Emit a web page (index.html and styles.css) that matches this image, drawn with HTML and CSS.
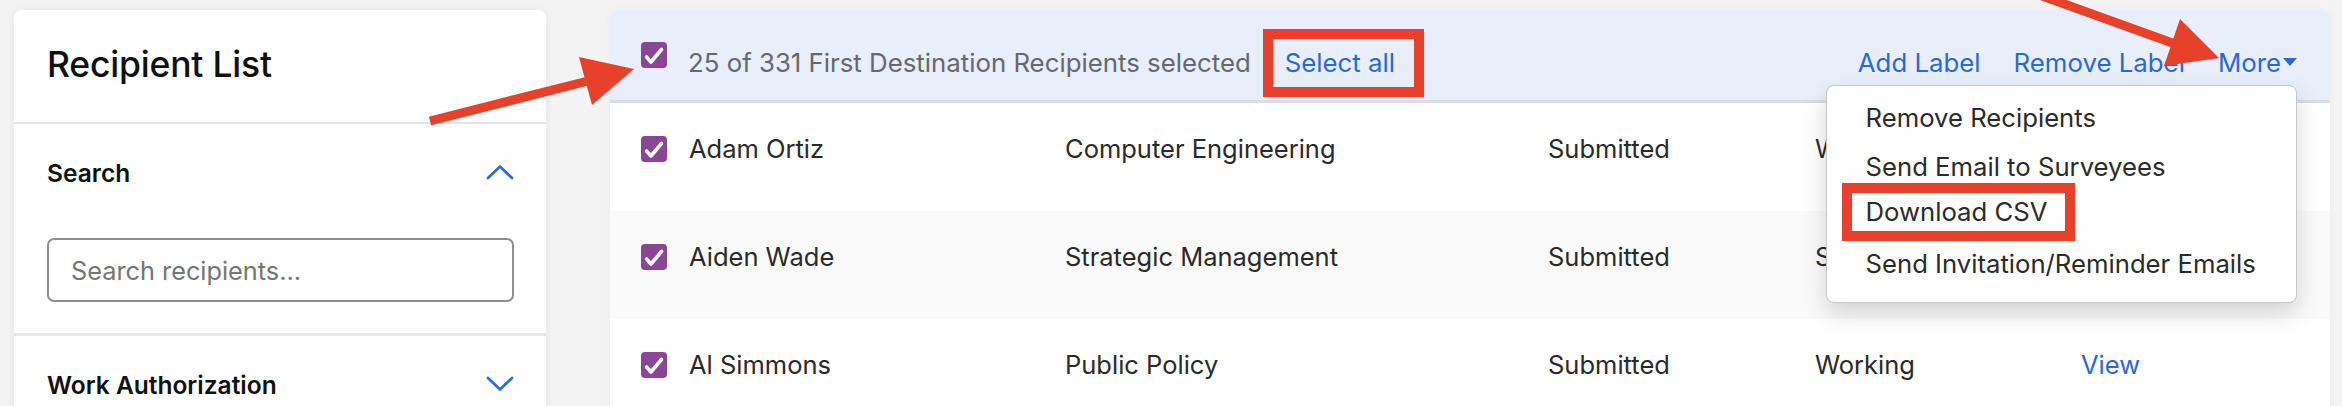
FILE: index.html
```html
<!DOCTYPE html>
<html lang="en">
<head>
<meta charset="utf-8">
<title>Recipient List</title>
<link rel="stylesheet" href="styles.css">
</head>
<body>
<div class="page">
  <aside class="sidebar">
    <div class="side-head"><h1 class="side-title">Recipient List</h1></div>
    <section class="filter">
      <div class="filter-head">
        <h2 class="filter-title">Search</h2>
        <svg class="chev" width="28" height="16" viewBox="0 0 28 16"><path d="M2 14 L14 2.5 L26 14" fill="none" stroke="#2b6de0" stroke-width="2.8" stroke-linecap="round" stroke-linejoin="round"/></svg>
      </div>
      <input class="search" type="text" placeholder="Search recipients...">
    </section>
    <section class="filter">
      <div class="filter-head">
        <h2 class="filter-title">Work Authorization</h2>
        <svg class="chev" width="28" height="16" viewBox="0 0 28 16"><path d="M2 2 L14 13.5 L26 2" fill="none" stroke="#2b6de0" stroke-width="2.8" stroke-linecap="round" stroke-linejoin="round"/></svg>
      </div>
    </section>
  </aside>

  <main class="panel">
    <div class="bulkbar">
      <span class="cb cb-head"><svg width="26" height="26" viewBox="0 0 26 26"><polyline points="5.5,15 10,20 20.5,7.5" fill="none" stroke="#fff" stroke-width="3.6" stroke-linecap="round" stroke-linejoin="round"/></svg></span>
      <span class="count">25 of 331 First Destination Recipients selected</span>
      <a class="link select-all">Select all</a>
      <div class="actions">
        <a class="link">Add Label</a>
        <a class="link">Remove Label</a>
        <a class="link more">More<span class="caret"></span></a>
      </div>
      <ul class="menu">
        <li class="menu-item">Remove Recipients</li>
        <li class="menu-item">Send Email to Surveyees</li>
        <li class="menu-item"><span class="marked">Download CSV</span></li>
        <li class="menu-item">Send Invitation/Reminder Emails</li>
      </ul>
    </div>

    <div class="row">
      <span class="cb"><svg width="26" height="26" viewBox="0 0 26 26"><polyline points="5.5,15 10,20 20.5,7.5" fill="none" stroke="#fff" stroke-width="3.6" stroke-linecap="round" stroke-linejoin="round"/></svg></span>
      <span class="cell">Adam Ortiz</span>
      <span class="cell">Computer Engineering</span>
      <span class="cell">Submitted</span>
      <span class="cell">Working</span>
      <a class="cell link">View</a>
    </div>
    <div class="row alt">
      <span class="cb"><svg width="26" height="26" viewBox="0 0 26 26"><polyline points="5.5,15 10,20 20.5,7.5" fill="none" stroke="#fff" stroke-width="3.6" stroke-linecap="round" stroke-linejoin="round"/></svg></span>
      <span class="cell">Aiden Wade</span>
      <span class="cell">Strategic Management</span>
      <span class="cell">Submitted</span>
      <span class="cell">Seeking</span>
      <a class="cell link">View</a>
    </div>
    <div class="row">
      <span class="cb"><svg width="26" height="26" viewBox="0 0 26 26"><polyline points="5.5,15 10,20 20.5,7.5" fill="none" stroke="#fff" stroke-width="3.6" stroke-linecap="round" stroke-linejoin="round"/></svg></span>
      <span class="cell">Al Simmons</span>
      <span class="cell">Public Policy</span>
      <span class="cell">Submitted</span>
      <span class="cell">Working</span>
      <a class="cell link">View</a>
    </div>
  </main>

  <svg class="arrows" width="2342" height="406" viewBox="0 0 2342 406">
    <line x1="430" y1="121" x2="592" y2="80" stroke="#e8412a" stroke-width="9"/>
    <polygon points="579,57 634,69 592,105" fill="#e8412a"/>
    <line x1="2020" y1="-12" x2="2178" y2="45" stroke="#e8412a" stroke-width="9"/>
    <polygon points="2180,19 2219,58 2164,66" fill="#e8412a"/>
  </svg>
</div>
</body>
</html>
```

FILE: styles.css
```css
* { box-sizing: border-box; }

html, body {
  margin: 0;
  padding: 0;
  height: 406px;
  overflow: hidden;
  background: #f4f4f4;
  font-family: "Inter", "Liberation Sans", sans-serif;
}

.page {
  position: relative;
  display: flex;
  gap: 64px;
  padding: 10px 12px 0 14px;
  height: 406px;
}

/* ---------- sidebar ---------- */
.sidebar {
  width: 532px;
  flex: none;
  height: 460px;
  background: #fff;
  border-radius: 8px 8px 0 0;
  box-shadow: 0 0 10px rgba(0, 0, 0, 0.07);
}

.side-head {
  height: 114px;
  display: flex;
  align-items: center;
  padding: 0 33px 3px;
  border-bottom: 2px solid #e3e3e3;
}

.side-title {
  margin: 0;
  font-size: 35.5px;
  font-weight: 500;
  line-height: 42px;
  color: #111;
  letter-spacing: -0.2px;
}

.filter {
  padding: 24px 32px 31px 33px;
  border-bottom: 3px solid #e6e6e6;
}

.filter-head {
  height: 50px;
  display: flex;
  align-items: center;
  justify-content: space-between;
}

.filter-title {
  margin: 0;
  font-size: 24.5px;
  font-weight: 600;
  line-height: 30px;
  color: #111;
}

.chev { display: block; margin-top: -3px; }

.search {
  display: block;
  width: 100%;
  height: 64px;
  margin-top: 40px;
  padding: 0 22px;
  border: 2px solid #8f8f8f;
  border-radius: 7px;
  font-family: inherit;
  font-size: 25.3px;
  color: #222;
  background: #fff;
  outline: none;
}
.search::placeholder { color: #767676; }

/* ---------- main panel ---------- */
.panel {
  flex: 1;
  height: 460px;
  background: #fff;
  border-radius: 8px 8px 0 0;
  box-shadow: 0 0 8px rgba(0, 0, 0, 0.04);
}

.bulkbar {
  position: relative;
  height: 93px;
  display: flex;
  align-items: center;
  padding: 15px 33px 0 31px;
  background: #e8eefa;
  border-radius: 8px 8px 0 0;
  border-bottom: 3px solid #d9dde4;
  font-size: 25.8px;
  line-height: 26px;
}

.cb {
  flex: none;
  width: 26px;
  height: 26px;
  border-radius: 4px;
  background: #8a4597;
  display: block;
}
.cb svg { display: block; }

.cb-head { margin-top: -15px; }

.count {
  margin-left: 21px;
  color: #67676d;
}

.link {
  color: #2a69d9;
  text-decoration: none;
  cursor: pointer;
}

.select-all {
  display: inline-block;
  margin-left: 34px;
  padding-right: 7px;
  line-height: 24px;
  outline: 10px solid #e8402a;
  outline-offset: 12px;
}

.actions {
  margin-left: auto;
  display: flex;
  align-items: center;
  gap: 33px;
}

.more {
  display: inline-flex;
  align-items: center;
}

.caret {
  width: 0;
  height: 0;
  margin-left: 2px;
  margin-top: -2px;
  border-left: 7.5px solid transparent;
  border-right: 7.5px solid transparent;
  border-top: 8px solid #2a69d9;
}

.menu {
  position: absolute;
  top: 75px;
  right: 33px;
  width: 471px;
  height: 218px;
  margin: 0;
  padding: 8px 0 0;
  list-style: none;
  background: #fff;
  border: 1.5px solid #c6c6c6;
  border-radius: 8px;
  box-shadow: 0 10px 24px rgba(0, 0, 0, 0.16);
  z-index: 5;
}

.menu-item {
  height: 48.5px;
  display: flex;
  align-items: center;
  padding-left: 38.5px;
  font-size: 25.7px;
  color: #2b2b2b;
}

.marked {
  padding: 4px 18px 4px 14px;
  margin: -6px -18px 0 -14px;
  line-height: 30px;
  outline: 10px solid #e8402a;
}

/* ---------- rows ---------- */
.row {
  height: 108px;
  display: grid;
  grid-template-columns: 48px 376px 483px 267px 266px 1fr;
  align-items: start;
  padding: 33px 0 0 31px;
  font-size: 25.5px;
  line-height: 26px;
  color: #2a2a2a;
}

.row.alt { background: #fafafa; }

.cell { white-space: nowrap; }

/* ---------- annotation arrows ---------- */
.arrows {
  position: absolute;
  top: 0;
  left: 0;
  pointer-events: none;
  z-index: 10;
}
```
